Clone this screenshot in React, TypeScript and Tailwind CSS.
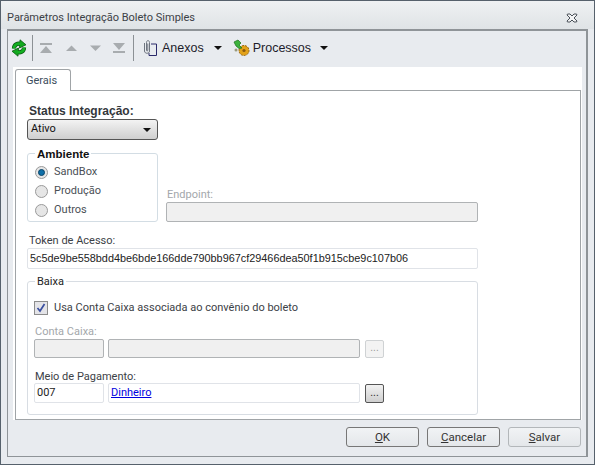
import React from "react";

const font = "font-['Liberation_Sans',sans-serif]";
const ui = "font-['Roboto',sans-serif] text-[11px]";

function Sync() {
  return (
    <svg width="16" height="18" viewBox="0 0 16 18" fill="none">
      <path d="M3 9.5 C3 5.5 6.5 4 10 5" stroke="#0b5a12" strokeWidth="4.2" />
      <path d="M13 8.5 C13 12.5 9.5 14 6 13" stroke="#0b5a12" strokeWidth="4.2" />
      <path d="M9 0.8 L15 5.8 L8.5 9 Z" fill="#12a81f" stroke="#0b5a12" strokeWidth="0.8" />
      <path d="M7 17.2 L1 12.2 L7.5 9 Z" fill="#12a81f" stroke="#0b5a12" strokeWidth="0.8" />
      <path d="M3 9.5 C3 5.5 6.5 4 10 5" stroke="#14b022" strokeWidth="2.8" />
      <path d="M13 8.5 C13 12.5 9.5 14 6 13" stroke="#14b022" strokeWidth="2.8" />
    </svg>
  );
}

function Nav({ kind }: { kind: "first" | "up" | "down" | "last" }) {
  const c = "#a8acaf";
  return (
    <svg width="14" height="12" viewBox="0 0 14 12">
      {kind === "first" && <><rect x="1" y="1" width="12" height="2" fill={c} /><path d="M1 11 L7 4 L13 11 Z" fill={c} /></>}
      {kind === "up" && <path d="M2 9 L7.5 3.5 L13 9 Z" fill={c} />}
      {kind === "down" && <path d="M2 3.5 L7.5 9 L13 3.5 Z" fill={c} />}
      {kind === "last" && <><path d="M1 1 L7 8 L13 1 Z" fill={c} /><rect x="1" y="9" width="12" height="2" fill={c} /></>}
    </svg>
  );
}

function Clip() {
  return (
    <svg width="16" height="18" viewBox="0 0 16 18" fill="none">
      <path d="M9 5 H14.5 V16.5 H7 V14" stroke="#2a2a6a" strokeWidth="1" />
      <path d="M2.5 4 V12 C2.5 15 7.5 15 7.5 12 V3.5 C7.5 1 4.5 1 4.5 3.5 V11 C4.5 12.4 5.8 12.4 5.8 11 V4.5" stroke="#6f7680" strokeWidth="1" />
    </svg>
  );
}

function Gear() {
  return (
    <svg width="18" height="18" viewBox="0 0 18 18">
      <circle cx="11" cy="11.5" r="5" fill="#e3a21a" stroke="#94630c" strokeWidth="1" strokeDasharray="2 1" />
      <circle cx="11" cy="11.5" r="1.6" fill="#8a5a10" />
      <path d="M1 3 L5 1 L8 4 L6 6 L9 9 L6 9.5 L3 7 Z" fill="#3cb23c" stroke="#1b6d1b" strokeWidth="0.7" />
      <circle cx="3" cy="11" r="1.5" fill="#9a9a7a" />
    </svg>
  );
}

function Caret() {
  return <span className="w-0 h-0 border-x-[4px] border-x-transparent border-t-[4px] border-t-[#111]" />;
}

function Sep() {
  return <span className="w-px h-[26px] bg-[#8c9195]" />;
}

function Radio({ label, on, mt }: { label: string; on?: boolean; mt: string }) {
  return (
    <div className={`flex items-center ${mt}`}>
      <span className="w-[13px] h-[13px] rounded-full border border-[#9a9a9a] bg-[#e6e6e6] flex items-center justify-center">
        {on && <span className="w-[7px] h-[7px] rounded-full bg-[#0f6fa8] border border-[#0a4468]" />}
      </span>
      <span className={`ml-[6px] ${ui} leading-[14px] text-[#4a4f55]`}>{label}</span>
    </div>
  );
}

function FooterBtn({ first, rest, dim }: { first: string; rest: string; dim?: boolean }) {
  return (
    <button className={`w-[73px] h-[20px] rounded-[3px] border bg-gradient-to-b from-[#f1f3f5] to-[#e4e7ea] font-['Roboto',sans-serif] text-[11.5px] leading-[17px] text-[#333] ${dim ? "border-[#b3b7ba]" : "border-[#777]"}`}>
      <span className="underline">{first}</span>{rest}
    </button>
  );
}

export default function App() {
  return (
    <div className={`${font} w-[595px] h-[465px] border border-[#56616c] bg-[#e8ebef] flex flex-col overflow-hidden`}>
      <div className="h-[28px] shrink-0 pl-[6px] pr-[16px] flex items-center justify-between bg-gradient-to-b from-[#eff1f3] to-[#dfe3e6]">
        <span className={`${ui} text-[#3c4146] mt-[7px]`}>Parâmetros Integração Boleto Simples</span>
        <svg width="12" height="10" viewBox="0 0 12 10" className="mt-[6px]" fill="none">
          <path d="M1.5 1 H4 L6 3 L8 1 H10.5 L11 2 L8 5 L11 8 L10.5 9 H8 L6 7 L4 9 H1.5 L1 8 L4 5 L1 2 Z" stroke="#4a5159" strokeWidth="1" fill="#f3f4f5" />
        </svg>
      </div>
      <div className="mx-[6px] w-[581px] h-[428px] border border-t-2 border-r-2 border-[#8f9498] flex flex-col">
        <div className="h-[36px] shrink-0 pb-[2px] flex items-center text-[12.5px] text-[#1d1d2b]">
          <span className="ml-[3px] w-[16px] flex"><Sync /></span>
          <span className="ml-[5px] flex"><Sep /></span>
          <span className="ml-[6px] flex"><Nav kind="first" /></span>
          <span className="ml-[11px] flex"><Nav kind="up" /></span>
          <span className="ml-[10px] flex"><Nav kind="down" /></span>
          <span className="ml-[10px] flex"><Nav kind="last" /></span>
          <span className="ml-[7px] flex"><Sep /></span>
          <span className="ml-[8px] flex"><Clip /></span>
          <span className="ml-[4px]">Anexos</span>
          <span className="ml-[10px] flex"><Caret /></span>
          <span className="ml-[11px] flex"><Gear /></span>
          <span className="ml-[2px]">Processos</span>
          <span className="ml-[9px] flex"><Caret /></span>
        </div>
        <div className="ml-[5px] w-[569px] h-[353px] bg-white pl-[2px] pt-[2px] flex flex-col">
          <div className={`w-[56px] h-[22px] -mb-px z-10 border border-b-0 border-[#a0a4a7] rounded-t-[3px] bg-white ${ui} text-[#3c4d5c] pl-[10px] pt-[3px]`}>Gerais</div>
          <div className="w-[566px] h-[330px] border border-[#a0a4a7] pl-[11px] flex flex-col">
            <div className="mt-[13px] h-[14px] text-[12px] leading-[14px] font-bold text-[#33373b] pl-[2px]">Status Integração:</div>
            <div className={`mt-px w-[131px] h-[21px] rounded-[3px] border border-[#555] bg-gradient-to-b from-[#f3f3f3] to-[#cfcfcf] flex items-center justify-between pl-[3px] pr-[6px] ${ui} text-[#111]`}>
              <span>Ativo</span><Caret />
            </div>
            <div className="mt-[13px] flex">
              <div className="relative w-[131px] h-[69px] rounded-[3px] border border-[#d3dde4] pl-[7px] pt-[11px]">
                <span className="absolute left-[7px] -top-[7px] bg-white px-[2px] text-[11.5px] leading-[14px] font-bold text-[#111]">Ambiente</span>
                <Radio label="SandBox" on mt="" />
                <Radio label="Produção" mt="mt-[5px]" />
                <Radio label="Outros" mt="mt-[5px]" />
              </div>
              <div className="ml-[8px] flex flex-col justify-end">
                <span className={`pl-px ${ui} leading-[14px] text-[#a3a7ab]`}>Endpoint:</span>
                <div className="w-[312px] h-[20px] rounded-[2px] border border-[#b0b3b5] bg-[#f0f0f0]" />
              </div>
            </div>
            <div className={`mt-[12px] h-[14px] pl-[2px] ${ui} leading-[14px] text-[#3c4146]`}>Token de Acesso:</div>
            <div className="w-[451px] h-[21px] rounded-[2px] border border-[#e0e3e8] pl-[2px] text-[10.87px] leading-[19px] text-[#222] whitespace-nowrap overflow-hidden">5c5de9be558bdd4be6bde166dde790bb967cf29466dea50f1b915cbe9c107b06</div>
            <div className="relative mt-[12px] w-[451px] h-[134px] rounded-[3px] border border-[#d8dde3] pl-[6px] flex flex-col">
              <span className={`absolute left-[7px] -top-[7px] bg-white px-[2px] ${ui} leading-[14px] text-[#222]`}>Baixa</span>
              <div className="mt-[19px] flex items-center h-[14px]">
                <span className="w-[14px] h-[14px] border border-[#8c8c8c] bg-[#e4e4e8] flex items-center justify-center">
                  <svg width="10" height="10" viewBox="0 0 10 10" fill="none"><path d="M1.5 5 L4 8 L8.5 1" stroke="#3a4fa0" strokeWidth="1.7" /></svg>
                </span>
                <span className={`ml-[6px] ${ui} text-[#3c4146]`}>Usa Conta Caixa associada ao convênio do boleto</span>
              </div>
              <div className={`mt-[10px] h-[14px] pl-px ${ui} leading-[14px] text-[#a3a7ab]`}>Conta Caixa:</div>
              <div className="flex items-end">
                <div className="w-[70px] h-[19px] rounded-[2px] border border-[#b0b3b5] bg-[#f0f0f0]" />
                <div className="ml-[4px] w-[252px] h-[19px] rounded-[2px] border border-[#b0b3b5] bg-[#f0f0f0]" />
                <div className="ml-[5px] w-[19px] h-[18px] rounded-[2px] border border-[#cfd2d4] bg-[#f3f3f3] text-[10px] leading-[14px] text-center text-[#999]">...</div>
              </div>
              <div className={`mt-[12px] h-[13px] pl-px ${ui} leading-[14px] text-[#3c4146]`}>Meio de Pagamento:</div>
              <div className="flex items-end">
                <div className={`w-[70px] h-[20px] rounded-[2px] border border-[#e0e3e8] pl-[2px] ${ui} leading-[18px] text-[#222]`}>007</div>
                <div className={`ml-[4px] w-[252px] h-[20px] rounded-[2px] border border-[#e0e3e8] pl-[2px] ${ui} leading-[18px] text-[#0000e0] underline`}>Dinheiro</div>
                <div className="ml-[5px] w-[19px] h-[19px] rounded-[2px] border border-[#555] bg-gradient-to-b from-[#f2f2f2] to-[#cfcfcf] text-[10px] leading-[15px] text-center text-[#222]">...</div>
              </div>
            </div>
          </div>
        </div>
        <div className="flex pl-[338px] pt-[7px] gap-[8px]">
          <FooterBtn first="O" rest="K" />
          <FooterBtn first="C" rest="ancelar" />
          <FooterBtn first="S" rest="alvar" dim />
        </div>
      </div>
    </div>
  );
}
